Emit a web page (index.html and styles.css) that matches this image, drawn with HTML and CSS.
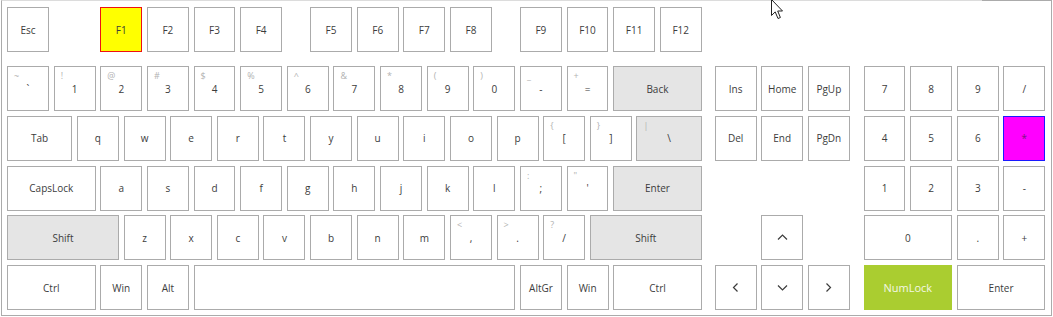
FILE: index.html
```html
<!DOCTYPE html>
<html lang="en">
<head>
    <meta charset="UTF-8">
    <title>On-screen Keyboard</title>
    <link rel="stylesheet" href="styles.css">
</head>
<body>
    <div class="keyboard">
        <!-- main block -->
        <div class="block block-main">
            <div class="row row-fn">
                <button class="key">Esc</button>
                <span class="spacer w1"></span>
                <button class="key key-marked">F1</button>
                <button class="key">F2</button>
                <button class="key">F3</button>
                <button class="key">F4</button>
                <span class="spacer w05"></span>
                <button class="key">F5</button>
                <button class="key">F6</button>
                <button class="key">F7</button>
                <button class="key">F8</button>
                <span class="spacer w05"></span>
                <button class="key">F9</button>
                <button class="key">F10</button>
                <button class="key">F11</button>
                <button class="key">F12</button>
            </div>
            <div class="row">
                <button class="key"><span class="shift">~</span>`</button>
                <button class="key"><span class="shift">!</span>1</button>
                <button class="key"><span class="shift">@</span>2</button>
                <button class="key"><span class="shift">#</span>3</button>
                <button class="key"><span class="shift">$</span>4</button>
                <button class="key"><span class="shift">%</span>5</button>
                <button class="key"><span class="shift">^</span>6</button>
                <button class="key"><span class="shift">&amp;</span>7</button>
                <button class="key"><span class="shift">*</span>8</button>
                <button class="key"><span class="shift">(</span>9</button>
                <button class="key"><span class="shift">)</span>0</button>
                <button class="key"><span class="shift">_</span>-</button>
                <button class="key"><span class="shift">+</span>=</button>
                <button class="key key-mod w2">Back</button>
            </div>
            <div class="row">
                <button class="key w15">Tab</button>
                <button class="key">q</button>
                <button class="key">w</button>
                <button class="key">e</button>
                <button class="key">r</button>
                <button class="key">t</button>
                <button class="key">y</button>
                <button class="key">u</button>
                <button class="key">i</button>
                <button class="key">o</button>
                <button class="key">p</button>
                <button class="key"><span class="shift">{</span>[</button>
                <button class="key"><span class="shift">}</span>]</button>
                <button class="key key-mod w15"><span class="shift">|</span>\</button>
            </div>
            <div class="row">
                <button class="key w2">CapsLock</button>
                <button class="key">a</button>
                <button class="key">s</button>
                <button class="key">d</button>
                <button class="key">f</button>
                <button class="key">g</button>
                <button class="key">h</button>
                <button class="key">j</button>
                <button class="key">k</button>
                <button class="key">l</button>
                <button class="key"><span class="shift">:</span>;</button>
                <button class="key"><span class="shift">"</span>'</button>
                <button class="key key-mod w2">Enter</button>
            </div>
            <div class="row">
                <button class="key key-mod w25">Shift</button>
                <button class="key">z</button>
                <button class="key">x</button>
                <button class="key">c</button>
                <button class="key">v</button>
                <button class="key">b</button>
                <button class="key">n</button>
                <button class="key">m</button>
                <button class="key"><span class="shift">&lt;</span>,</button>
                <button class="key"><span class="shift">&gt;</span>.</button>
                <button class="key"><span class="shift">?</span>/</button>
                <button class="key key-mod w25">Shift</button>
            </div>
            <div class="row">
                <button class="key w2">Ctrl</button>
                <button class="key">Win</button>
                <button class="key">Alt</button>
                <button class="key w7"></button>
                <button class="key">AltGr</button>
                <button class="key">Win</button>
                <button class="key w2">Ctrl</button>
            </div>
        </div>

        <!-- navigation block -->
        <div class="block block-nav">
            <div class="row row-fn"></div>
            <div class="row">
                <button class="key">Ins</button>
                <button class="key">Home</button>
                <button class="key">PgUp</button>
            </div>
            <div class="row">
                <button class="key">Del</button>
                <button class="key">End</button>
                <button class="key">PgDn</button>
            </div>
            <div class="row"></div>
            <div class="row">
                <span class="spacer w1"></span>
                <button class="key" aria-label="Up">
                    <svg class="arrow" width="11" height="11" viewBox="0 0 11 11"><polyline points="1,7.5 5.5,3 10,7.5"/></svg>
                </button>
            </div>
            <div class="row">
                <button class="key" aria-label="Left">
                    <svg class="arrow" width="11" height="11" viewBox="0 0 11 11"><polyline points="7.5,1.5 3.5,5.5 7.5,9.5"/></svg>
                </button>
                <button class="key" aria-label="Down">
                    <svg class="arrow" width="11" height="11" viewBox="0 0 11 11"><polyline points="1,3.5 5.5,8 10,3.5"/></svg>
                </button>
                <button class="key" aria-label="Right">
                    <svg class="arrow" width="11" height="11" viewBox="0 0 11 11"><polyline points="3.5,1.5 7.5,5.5 3.5,9.5"/></svg>
                </button>
            </div>
        </div>

        <!-- numpad -->
        <div class="block block-num">
            <div class="row row-fn"></div>
            <div class="row">
                <button class="key">7</button>
                <button class="key">8</button>
                <button class="key">9</button>
                <button class="key">/</button>
            </div>
            <div class="row">
                <button class="key">4</button>
                <button class="key">5</button>
                <button class="key">6</button>
                <button class="key key-hot">*</button>
            </div>
            <div class="row">
                <button class="key">1</button>
                <button class="key">2</button>
                <button class="key">3</button>
                <button class="key">-</button>
            </div>
            <div class="row">
                <button class="key w2">0</button>
                <button class="key">.</button>
                <button class="key">+</button>
            </div>
            <div class="row">
                <button class="key key-on w2">NumLock</button>
                <button class="key w2">Enter</button>
            </div>
        </div>

        <svg class="pointer" width="14" height="22" viewBox="0 0 14 22">
            <path d="M1.5,0.5 L1.5,16.5 L5.2,12.9 L8,19.5 L10.4,18.5 L7.7,12 L12.5,12 Z"/>
        </svg>
    </div>
</body>
</html>
```

FILE: styles.css
```css
* {
    box-sizing: border-box;
}
body {
    margin: 0;
    background: #ffffff;
    font-family: 'Open Sans', 'Noto Sans', sans-serif;
}
.keyboard {
    --u: 46.64px;
    --gap: 4.67px;
    position: relative;
    display: flex;
    width: 1051px;
    height: 316px;
    margin-left: 1px;
    padding: 6px 0 0 5px;
    border: 1px solid #ababab;
    border-top-color: #dcdcdc;
}
.keyboard::after {
    content: "";
    position: absolute;
    top: -1px;
    right: -1px;
    width: 70px;
    height: 1px;
    background: #ababab;
}
.block {
    display: flex;
    flex-direction: column;
}
.block-main {
    width: calc(var(--u) * 15);
}
.block-nav {
    width: calc(var(--u) * 3);
    margin-left: 8px;
}
.block-num {
    width: calc(var(--u) * 4);
    margin-left: 9px;
}
.row {
    display: flex;
    height: 45px;
    margin-bottom: 4.8px;
}
.row-fn {
    margin-bottom: 14px;
}
.key {
    position: relative;
    display: flex;
    align-items: center;
    justify-content: center;
    flex: none;
    width: calc(var(--u) - var(--gap));
    height: 45px;
    margin: 0 var(--gap) 0 0;
    padding: 0;
    border: 1px solid #ababab;
    background: #ffffff;
    color: #3c3c3c;
    font-family: 'Open Sans', 'Noto Sans', sans-serif;
    font-size: 10px;
    line-height: 1;
}
.spacer {
    flex: none;
}
.w05 { width: calc(var(--u) * 0.5); }
.spacer.w1 { width: var(--u); }
.key.w15 { width: calc(var(--u) * 1.5 - var(--gap)); }
.key.w2 { width: calc(var(--u) * 2 - var(--gap)); }
.key.w25 { width: calc(var(--u) * 2.5 - var(--gap)); }
.key.w7 { width: calc(var(--u) * 7 - var(--gap)); }

.key-mod {
    background: #e5e5e5;
}
.key-marked {
    background: #ffff00;
    border-color: #ee1111;
}
.key-hot {
    background: #ff00ff;
    border-color: #1a1aff;
    color: #7a1a7a;
}
.key-on {
    background: #aacd30;
    border-color: #aacd30;
    color: #f4f8e6;
    font-size: 11px;
}
.shift {
    position: absolute;
    top: 4px;
    left: 6px;
    font-size: 9px;
    color: #b2b2b2;
}
.arrow {
    fill: none;
    stroke: #3c3c3c;
    stroke-width: 1.2;
}
.pointer {
    position: absolute;
    top: -2px;
    left: 768px;
    fill: #ffffff;
    stroke: #222222;
    stroke-width: 1;
}
```
